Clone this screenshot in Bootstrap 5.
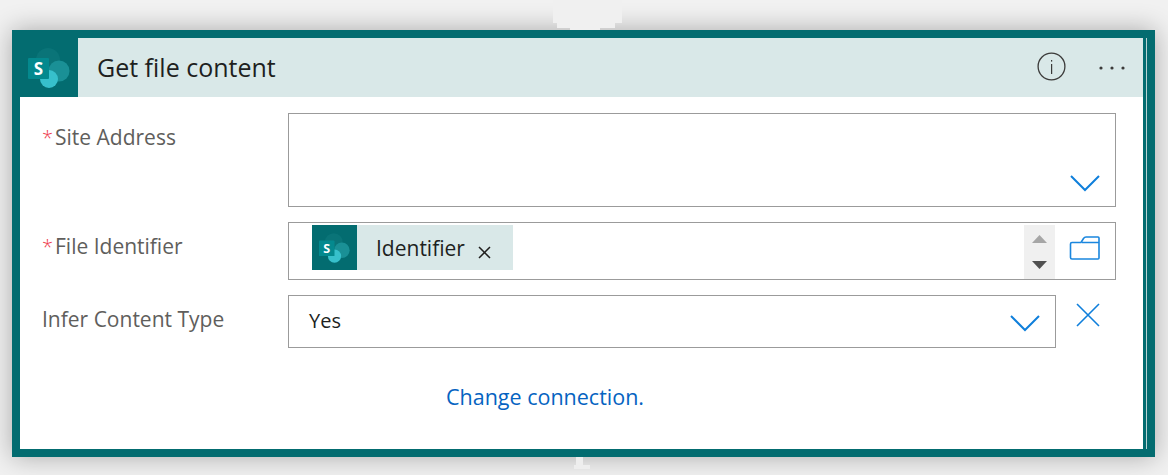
<!DOCTYPE html>
<html lang="en">
<head>
<meta charset="utf-8">
<title>Get file content</title>
<link href="https://cdn.jsdelivr.net/npm/bootstrap@5.3.0/dist/css/bootstrap.min.css" rel="stylesheet">
<style>
html,body{height:475px;overflow:hidden}
body{background:#f1f1f1;font-family:"Open Sans","Noto Sans",sans-serif;color:#605e5c}
.stage{position:relative;height:475px;padding:30px 13px 18px 12px}
.conn-top{position:absolute;left:553px;top:0;width:69px;height:30px;background:#f0f0f0;z-index:2;clip-path:polygon(0 0,69px 0,69px 23px,62px 23px,62px 28px,47px 28px,47px 30px,17px 30px,17px 28px,4px 28px,4px 23px,0 23px)}
.conn-bottom{position:absolute;left:574px;top:457px;width:16px;height:12px;background:#eeeeee;z-index:2;clip-path:polygon(2px 0,9px 0,9px 8px,16px 8px,16px 12px,0 12px,0 8px,2px 8px)}
.flow-card{height:427px;background:#fff;border:8px solid #036c70;border-right-width:12px;box-shadow:0 0 24px rgba(0,0,0,.3);position:relative}
.flow-card::after{content:"";position:absolute;right:-4px;top:0;bottom:0;width:1px;background:#b9d3d4}
.head-row{height:59px;background:#d9e8e8}
.logo-cell{width:58px;background:#036c70}
.head-title{font-size:25px;color:#201f1e;margin-left:19px;line-height:59px;font-weight:400}
.head-tools{margin-right:18px;gap:33px}
.tool-info{margin-bottom:3px}
.form-area{padding:16px 27px 0 22px}
.form-line{margin-bottom:15px}
.field-name{width:246px;font-size:21px;line-height:27px;padding-top:11px}
.req{color:#ee3b4c;margin-right:2px;font-size:20px;font-weight:300}
.field-box{border:1px solid #9b9b9b;background:#fff;flex:1 1 auto;position:relative}
.tall{height:94px}
.mid{height:58px}
.short{height:53px;flex:0 0 768px}
.chev{position:absolute}
.chip-wrap{position:absolute;left:23px;top:2px;height:45px}
.chip-logo{width:45px;height:45px;background:#036c70}
.chip-body{width:156px;height:45px;background:#d9e8e8;color:#201f1e;font-size:21px;padding-left:19px;line-height:47px}
.chip-close{margin-top:21px;margin-left:13px}
.spin{position:absolute;right:60px;top:2px;bottom:0;width:31px;background:#f0f0f0}
.val-text{font-size:20px;line-height:49px;padding-left:20px;color:#201f1e}
.clear-x{margin-left:20px;margin-top:8px}
.conn-link{font-size:21.5px;color:#0563c1;text-decoration:none;line-height:27px}
.link-line{padding-top:20px;padding-right:68px}
</style>
</head>
<body>
<div class="stage">
<div class="conn-top"></div>
<div class="conn-bottom"></div>
<div class="flow-card">
  <div class="d-flex head-row">
    <div class="logo-cell d-flex align-items-center justify-content-center">
      <svg width="42" height="40" viewBox="0 0 42 40"><circle cx="20" cy="12" r="12" fill="#0a7478"/><circle cx="31" cy="23" r="10.5" fill="#1a9096"/><circle cx="21" cy="31" r="9" fill="#37c0cb"/><rect x="0" y="10" width="21" height="21" rx="1" fill="#04898e"/><text x="10.5" y="26.5" text-anchor="middle" font-family="'Open Sans',sans-serif" font-weight="700" font-size="17" fill="#fff">S</text></svg>
    </div>
    <div class="head-title flex-grow-1">Get file content</div>
    <div class="d-flex align-items-center head-tools">
      <svg class="tool-info" width="29" height="29" viewBox="0 0 29 29"><circle cx="14.5" cy="14.5" r="13.4" fill="none" stroke="#3b3a39" stroke-width="1.3"/><rect x="14" y="12" width="1.2" height="10" fill="#3b3a39"/><rect x="14" y="8" width="1.2" height="1.6" fill="#3b3a39"/></svg>
      <svg width="26" height="4" viewBox="0 0 26 4"><circle cx="2" cy="2" r="1.6" fill="#3b3a39"/><circle cx="13" cy="2" r="1.6" fill="#3b3a39"/><circle cx="24" cy="2" r="1.6" fill="#3b3a39"/></svg>
    </div>
  </div>
  <div class="form-area">
    <div class="d-flex form-line">
      <div class="field-name"><span class="req">*</span>Site Address</div>
      <div class="field-box tall">
        <svg class="chev" style="right:15px;bottom:14px" width="30" height="18" viewBox="0 0 30 18"><path d="M1 2 L15 16 L29 2" fill="none" stroke="#0f7fdb" stroke-width="2"/></svg>
      </div>
    </div>
    <div class="d-flex form-line">
      <div class="field-name"><span class="req">*</span>File Identifier</div>
      <div class="field-box mid">
        <div class="chip-wrap d-flex">
          <div class="chip-logo d-flex align-items-center justify-content-center"><svg width="31" height="30" viewBox="0 0 42 40"><circle cx="20" cy="12" r="12" fill="#0a7478"/><circle cx="31" cy="23" r="10.5" fill="#1a9096"/><circle cx="21" cy="31" r="9" fill="#37c0cb"/><rect x="0" y="10" width="21" height="21" rx="1" fill="#04898e"/><text x="10.5" y="26.5" text-anchor="middle" font-family="'Open Sans',sans-serif" font-weight="700" font-size="17" fill="#fff">S</text></svg></div>
          <div class="chip-body d-flex"><span>Identifier</span><svg class="chip-close" width="13" height="13" viewBox="0 0 13 13"><path d="M1 1 L12 12 M12 1 L1 12" stroke="#201f1e" stroke-width="1.5"/></svg></div>
        </div>
        <div class="spin">
          <svg class="d-block" width="31" height="52" viewBox="0 0 31 52"><path d="M15.5 10 L23 18 H8 Z" fill="#a6a6a6"/><path d="M8 36 H23 L15.5 44 Z" fill="#505050"/></svg>
        </div>
        <svg class="chev" style="right:15px;top:13px" width="31" height="24" viewBox="0 0 31 24"><path d="M1.5 8 V21.5 Q1.5 23 3 23 H29 Q30 23 30 22 V2 Q30 1 29 1 H17 Q15.5 1 14.5 2.5 L12 6.5 H3 Q1.5 6.5 1.5 8 Z M13 6.5 H30" fill="none" stroke="#1a86de" stroke-width="1.6"/></svg>
      </div>
    </div>
    <div class="d-flex form-line">
      <div class="field-name">Infer Content Type</div>
      <div class="field-box short">
        <div class="val-text">Yes</div>
        <svg class="chev" style="right:15px;top:18px" width="30" height="18" viewBox="0 0 30 18"><path d="M1 2 L15 16 L29 2" fill="none" stroke="#0f7fdb" stroke-width="2"/></svg>
      </div>
      <svg class="clear-x" width="24" height="24" viewBox="0 0 24 24"><path d="M1 1 L23 23 M23 1 L1 23" stroke="#0f7fdb" stroke-width="1.6"/></svg>
    </div>
    <div class="text-center link-line"><a class="conn-link" href="#">Change connection.</a></div>
  </div>
</div>
</div>
</body>
</html>
